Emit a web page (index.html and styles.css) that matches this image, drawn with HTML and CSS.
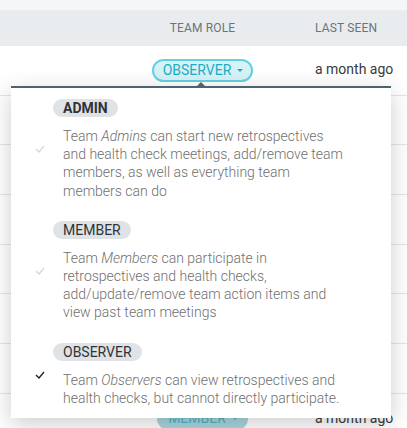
FILE: index.html
```html
<!DOCTYPE html>
<html>
<head>
<meta charset="utf-8">
<link rel="stylesheet" href="styles.css">
</head>
<body>
<div class="page">
  <div class="topbar"></div>
  <div class="thead">
    <div></div>
    <div class="c-role">TEAM ROLE</div>
    <div class="c-seen">LAST SEEN</div>
  </div>
  <div class="rows">
    <div class="row first">
      <div></div>
      <div class="c-role"><span class="pill">OBSERVER<span class="caret"></span></span></div>
      <div class="c-seen">a month ago</div>
    </div>
    <div class="row"><div></div><div class="c-role"></div><div class="c-seen"></div></div>
    <div class="row"><div></div><div class="c-role"></div><div class="c-seen"></div></div>
    <div class="row"><div></div><div class="c-role"></div><div class="c-seen"></div></div>
    <div class="row"><div></div><div class="c-role"></div><div class="c-seen"></div></div>
    <div class="row"><div></div><div class="c-role"></div><div class="c-seen"></div></div>
    <div class="row"><div></div><div class="c-role"></div><div class="c-seen"></div></div>
    <div class="row"><div></div><div class="c-role"><span class="pill member">MEMBER<span class="caret"></span></span></div><div class="c-seen">a month ago</div></div>
  </div>

  <div class="dropdown">
    <span class="dd-arrow"></span>
    <div class="item">
      <svg class="check" width="10" height="8" viewBox="0 0 10 8"><path d="M1 4 L4 7 L9 1" fill="none" stroke="currentColor" stroke-width="1.2"/></svg>
      <div class="item-body">
        <span class="badge bold">ADMIN</span>
        <p class="desc">Team <em>Admins</em> can start new retrospectives and health check meetings, add/remove team members, as well as everything team members can do</p>
      </div>
    </div>
    <div class="item">
      <svg class="check" width="10" height="8" viewBox="0 0 10 8"><path d="M1 4 L4 7 L9 1" fill="none" stroke="currentColor" stroke-width="1.2"/></svg>
      <div class="item-body">
        <span class="badge">MEMBER</span>
        <p class="desc">Team <em>Members</em> can participate in retrospectives and health checks, add/update/remove team action items and view past team meetings</p>
      </div>
    </div>
    <div class="item selected">
      <svg class="check" width="10" height="8" viewBox="0 0 10 8"><path d="M1 4 L4 7 L9 1" fill="none" stroke="currentColor" stroke-width="1.4"/></svg>
      <div class="item-body">
        <span class="badge">OBSERVER</span>
        <p class="desc">Team <em>Observers</em> can view retrospectives and health checks, but cannot directly participate.</p>
      </div>
    </div>
  </div>
</div>
</body>
</html>
```

FILE: styles.css
```css
* { box-sizing: border-box; }
html, body { margin: 0; padding: 0; }
body {
  font-family: Roboto, "Liberation Sans", sans-serif;
  background: #ffffff;
  width: 407px;
  height: 428px;
  overflow: hidden;
}
.page { position: relative; width: 407px; height: 428px; overflow: hidden; }
.topbar { height: 10px; background: #f5f6f8; }
.thead {
  display: grid;
  grid-template-columns: 139px 127px 1fr;
  height: 36px;
  align-items: center;
  background: #e9ecef;
  color: #6b747b;
  font-size: 12px;
  letter-spacing: 0.15px;
}
.c-role { text-align: center; }
.c-seen { padding-left: 49px; }
.row {
  display: grid;
  grid-template-columns: 139px 127px 1fr;
  height: 49.7px;
  align-items: center;
  border-bottom: 1px solid #e3e6e9;
  font-size: 14px;
  color: #333;
}
.row .c-seen { padding-left: 49px; font-size: 14px; color: #3a3a3a; }
.row.first { align-items: start; padding-top: 13px; }
.row.first .c-seen { padding-top: 2px; }
.pill {
  display: inline-flex;
  align-items: center;
  height: 23px;
  padding: 0 8px 0 9px;
  border: 2px solid #62d2e2;
  border-radius: 12px;
  background: #d7f2f7;
  color: #1aaec4;
  font-size: 14px;
  line-height: 19px;
}
.caret {
  display: inline-block;
  width: 0; height: 0;
  margin-left: 6px;
  border-left: 3.5px solid transparent;
  border-right: 3.5px solid transparent;
  border-top: 3.5px solid currentColor;
}
.pill.member { border-color: #a9d7de; background: #a9d7de; color: #51b3c7; }

.dropdown {
  position: absolute;
  left: 11px;
  top: 86px;
  width: 380px;
  height: 332px;
  background: #fff;
  border-top: 2px solid #4d6470;
  box-shadow: 0 6px 22px rgba(0, 0, 0, 0.2);
}
.dd-arrow {
  position: absolute;
  left: 186px;
  top: -6px;
  width: 0; height: 0;
  border-left: 4px solid transparent;
  border-right: 4px solid transparent;
  border-bottom: 4px solid #4d6470;
}
.item {
  display: flex;
  align-items: center;
  padding: 11px 0 10px 0;
}
.check {
  flex: none;
  width: 10px;
  height: 8px;
  margin-left: 24px;
  margin-right: 8px;
  color: #d3d6d9;
}
.item.selected .check { color: #222; }
.item-body { display: flex; flex-direction: column; align-items: flex-start; }
.badge {
  display: inline-block;
  height: 18px;
  line-height: 18px;
  padding: 0 10px;
  border-radius: 9px;
  background: #dfe3e6;
  color: #2f3338;
  font-size: 14px;
}
.badge.bold { font-weight: 700; }
.desc {
  margin: 10px 0 0 10px;
  width: 283px;
  font-size: 14px;
  line-height: 18.2px;
  font-weight: 300;
  color: #6f6f6f;
}
.desc em { font-style: italic; }
```
